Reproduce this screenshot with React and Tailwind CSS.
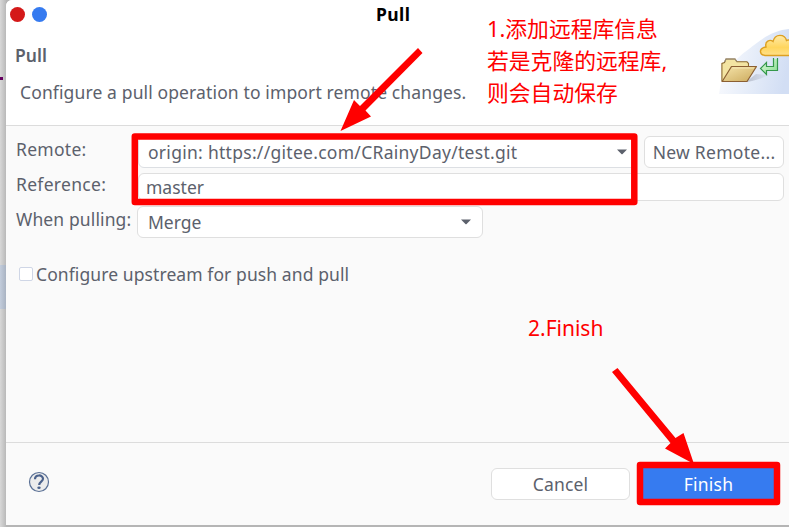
import React from "react";

function Caret() {
  return (
    <svg width="10" height="6" viewBox="0 0 10 6" className="shrink-0">
      <path d="M0 0.5H10L5.6 5Q5 5.5 4.4 5Z" fill="#5c616c" />
    </svg>
  );
}

function PullBanner() {
  return (
    <svg width="71" height="66" viewBox="0 0 71 66">
      <defs>
        <linearGradient id="sky" x1="0" x2="1" y1="0.3" y2="0.5">
          <stop offset="0" stopColor="#fafbfe" />
          <stop offset="0.5" stopColor="#e6edf9" />
          <stop offset="1" stopColor="#d2def4" />
        </linearGradient>
        <linearGradient id="cloud" x1="0" x2="0" y1="0" y2="1">
          <stop offset="0" stopColor="#ffeaa8" />
          <stop offset="0.6" stopColor="#ffd65e" />
          <stop offset="1" stopColor="#ffe08a" />
        </linearGradient>
        <linearGradient id="folder" x1="0" x2="1" y1="0" y2="1">
          <stop offset="0" stopColor="#f6e5ab" />
          <stop offset="1" stopColor="#cba95c" />
        </linearGradient>
        <linearGradient id="green" x1="0" x2="1" y1="0" y2="1">
          <stop offset="0" stopColor="#e5fbe3" />
          <stop offset="1" stopColor="#83dc8c" />
        </linearGradient>
        <linearGradient id="shade" x1="0" x2="1">
          <stop offset="0" stopColor="#8b92a3" stopOpacity="0.5" />
          <stop offset="1" stopColor="#8b92a3" stopOpacity="0.05" />
        </linearGradient>
      </defs>
      <path d="M1 66C3 47 14 33 31 21C44 10 57 2 71 1V66Z" fill="url(#sky)" />
      <path d="M28 54L38 46L50 47Q44 51 29 54Z" fill="url(#shade)" />
      <path d="M3.900 53V35.500L6.500 34.500L8 31H17L19 33.800H29L30.500 35.500V39L12 53Z" fill="#f3e4a2" stroke="#8b682d" strokeWidth="1.100" />
      <path d="M6.500 34L8 31H17L18.700 33.500" fill="none" stroke="#9a9080" strokeWidth="1.100" />
      <path d="M4.200 53.500L13.500 38.500H38.500L29 53.500Z" fill="url(#folder)" stroke="#8b5f32" strokeWidth="1.200" strokeLinejoin="round" />
      <path d="M14.500 40H36" stroke="#fbefbf" strokeWidth="0.800" />
      <path d="M55.500 31H59.500V42.500H48.500V46.500L42.500 40.500L48.500 34.500V38.500H55.500Z" fill="url(#green)" />
      <path d="M59.500 30V42.500H48.500V46.500L42.500 40.500L48.500 34.500V38.500H55.500V30" fill="none" stroke="#35984b" strokeWidth="1.200" />
      <path d="M47 27.500C41 26.500 40.500 20 48 19C46.500 13 52 11 55 13.500C57 5 67 6 68.500 12.500C70 11.500 71 11.500 73 13V27.500Z" fill="url(#cloud)" stroke="#dda021" strokeWidth="1.400" />
    </svg>
  );
}

export default function App() {
  return (
    <div className="relative flex h-[527px] w-[789px] overflow-hidden bg-[#b5b5b5] font-['Noto_Sans','Noto_Sans_CJK_SC',sans-serif] text-[17.500px] leading-6 whitespace-nowrap text-[#5c616c]">
      <aside className="flex w-1.5 shrink-0 flex-col bg-gradient-to-r from-[#d8d8d8] to-[#b9b9b9] pt-[77px]">
        <div className="h-[3px] w-[3px] bg-[#65005f]" />
        <div className="mt-[185px] h-11 bg-gradient-to-r from-[#c3cddc] to-[#a9b3c2]" />
      </aside>

      <main className="flex h-[525px] w-[783px] flex-col rounded-tl-md bg-[#fafafa]">
        <header className="flex h-[126px] shrink-0 justify-between rounded-tl-md border-b border-[#dcdcdc] bg-white">
          <div className="w-[461px]">
            <div className="flex h-7 items-center pl-[3.500px]">
              <span className="h-[15px] w-[15px] rounded-full bg-[#d41919]" />
              <span className="ml-[7px] h-[15px] w-[15px] rounded-full bg-[#367bf0]" />
              <span className="ml-[329.500px] text-[17.500px] font-bold tracking-[0.4px] text-black">Pull</span>
            </div>
            <h1 className="mt-[15px] ml-[9px] text-[17.500px] font-semibold">Pull</h1>
            <p className="mt-[13px] ml-3.5 tracking-[0.125px]">Configure a pull operation to import remote changes.</p>
          </div>
          <div className="pt-7">
            <PullBanner />
          </div>
        </header>

        <section className="flex h-[316px] shrink-0 flex-col pt-2.5 pr-[5px] pl-[10px]">
          <div className="flex h-8">
            <label className="w-[122px] pt-px tracking-[0.28px]">Remote:</label>
            <div className="flex h-8 w-[499px] items-center justify-between rounded-md border border-[#dcdfe3] bg-white pr-[9px] pl-[9px]">
              <span className="tracking-[0.28px]">origin: https://gitee.com/CRainyDay/test.git</span>
              <Caret />
            </div>
            <button className="ml-[7px] h-8 w-[140px] rounded-md border border-[#dfdfdf] bg-white tracking-[0.28px]">New Remote...</button>
          </div>
          <div className="mt-[5px] flex h-7">
            <label className="-mt-px w-[122px] tracking-[0.3px]">Reference:</label>
            <div className="flex h-7 w-[646px] items-center rounded-md border border-[#dfdfdf] bg-white pl-[7px]">master</div>
          </div>
          <div className="mt-[5px] flex h-8">
            <label className="w-[121px] pt-px tracking-[0.12px]">When pulling:</label>
            <div className="flex h-8 w-[346px] items-center justify-between rounded-md border border-[#dfdfdf] bg-white pr-[11px] pl-[10px]">
              <span>Merge</span>
              <Caret />
            </div>
          </div>
          <div className="mt-6 flex h-6 items-center pl-[3px]">
            <span className="h-3.5 w-3.5 rounded-[2px] border border-[#cfd6e6] bg-white" />
            <span className="ml-[3px] tracking-[0.09px]">Configure upstream for push and pull</span>
          </div>
        </section>

        <footer className="flex h-[83px] shrink-0 border-t border-[#dcdcdc] pt-[25px]">
          <svg width="22" height="22" viewBox="0 0 22 22" className="mt-[3px] ml-[22px]">
            <circle cx="11" cy="11" r="9.500" fill="#ececec" stroke="#5a7095" strokeWidth="1.200" />
            <path d="M7 8.200C7 3.300 15 3.300 15 7.800C15 10.500 11.200 10.800 11.200 14" fill="none" stroke="#4b628c" strokeWidth="2.200" />
            <ellipse cx="11" cy="16.800" rx="1.700" ry="1.200" fill="#4b628c" />
          </svg>
          <button className="ml-[441px] h-8 w-[139px] rounded-md border border-[#dfdfdf] bg-white tracking-[0.2px]">Cancel</button>
          <button className="ml-2 h-8 w-[141px] bg-[#367bf0] tracking-[0.2px] text-white">Finish</button>
        </footer>
      </main>

      <div className="absolute top-[13px] left-[487px] text-[21.800px] leading-8 text-[#ff0000]">
        <div>1.添加远程库信息</div>
        <div>若是克隆的远程库,</div>
        <div>则会自动保存</div>
      </div>
      <div className="absolute top-[312px] left-[528px] text-[21px] leading-8 text-[#ff0000]">2.Finish</div>

      <svg className="absolute inset-0" width="789" height="527" viewBox="0 0 789 527">
        <g fill="#ff0000">
          <path d="M418 48L422.500 53L365.500 110.500L371 116.500L340.500 131L354 100L360 106Z" />
          <path d="M612 372L617.500 368L675.500 438L683.500 433L694 464L665 448.500L670.500 443Z" />
        </g>
        <g fill="none" stroke="#ff0000" strokeWidth="6.500" strokeLinejoin="round">
          <rect x="134.800" y="136.600" width="499.500" height="65.400" />
          <rect x="640" y="465" width="137" height="37" />
        </g>
      </svg>
    </div>
  );
}
